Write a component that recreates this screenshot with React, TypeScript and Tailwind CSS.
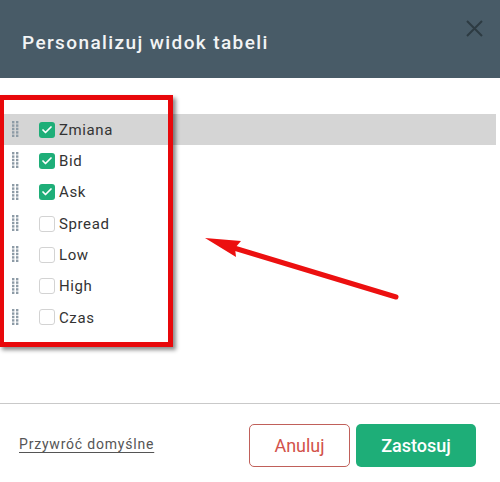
import { Check } from "lucide-react";

const columns = [
  { name: "Zmiana", checked: true, active: true },
  { name: "Bid", checked: true },
  { name: "Ask", checked: true },
  { name: "Spread", checked: false },
  { name: "Low", checked: false },
  { name: "High", checked: false },
  { name: "Czas", checked: false },
];

function DragHandle() {
  const dots = [];
  for (let r = 0; r < 5; r++) {
    for (let c = 0; c < 2; c++) {
      dots.push(<rect key={`${r}-${c}`} x={c * 4} y={r * 3.4} width="2.4" height="2.4" fill="#8d9ba6" />);
    }
  }
  return (
    <svg width="7" height="17" viewBox="0 0 7 17" className="shrink-0">
      {dots}
    </svg>
  );
}

export default function App() {
  return (
    <div className="relative w-[500px] h-[482px] bg-white overflow-hidden" style={{ fontFamily: "Roboto, 'Liberation Sans', sans-serif" }}>
      <header className="h-[78px] bg-[#485b67] flex items-center justify-between pl-[22px] pr-[16px]">
        <h1 className="text-[19px] font-medium tracking-[1.4px] text-[#f2f4f5] pt-[8px]">Personalizuj widok tabeli</h1>
        <button className="self-start mt-[19px] text-[#2d3b42]" aria-label="Zamknij">
          <svg width="19" height="19" viewBox="0 0 19 19">
            <path d="M2 2 L17 17 M17 2 L2 17" stroke="currentColor" strokeWidth="2" />
          </svg>
        </button>
      </header>

      <div className="h-[325px] pt-[36px] pr-[4px]">
        <ul>
          {columns.map((col) => (
            <li
              key={col.name}
              className={`h-[31.3px] flex items-center pl-[12px] ${col.active ? "bg-[#d5d5d5]" : ""}`}
            >
              <DragHandle />
              <span
                className={`ml-[20px] w-[16px] h-[16px] rounded-[3px] flex items-center justify-center ${
                  col.checked ? "bg-[#1eae78]" : "border border-[#d3d3d3] bg-white"
                }`}
              >
                {col.checked && <Check className="w-[12px] h-[12px] text-white" strokeWidth={3.5} />}
              </span>
              <span className="ml-[4px] pt-[1px] text-[15px] tracking-[0.6px] text-[#333]">{col.name}</span>
            </li>
          ))}
        </ul>
      </div>

      <footer className="border-t border-[#c9c9c9] h-[79px] flex items-center justify-between pl-[19px] pr-[24px]">
        <a href="#" className="text-[14px] tracking-[0.8px] text-[#555] underline underline-offset-[3px] pt-[2px]">
          Przywróć domyślne
        </a>
        <div className="flex gap-[6px] pt-[4px]">
          <button className="w-[101px] h-[43px] rounded-[5px] border border-[#c0605a] text-[#d2524a] text-[18px]">
            Anuluj
          </button>
          <button className="w-[120px] h-[43px] rounded-[5px] bg-[#1eae78] text-white text-[18px] font-medium">
            Zastosuj
          </button>
        </div>
      </footer>

      {/* annotation overlay */}
      <div className="absolute left-[-1px] top-[95px] w-[174px] h-[252px] border-[5px] border-[#e8080b] shadow-[3px_3px_4px_rgba(0,0,0,0.45)] pointer-events-none" />
      <svg className="absolute left-0 top-0 pointer-events-none" width="500" height="482" viewBox="0 0 500 482">
        <line x1="396" y1="297" x2="234" y2="248" stroke="#ec1010" strokeWidth="5" strokeLinecap="round" />
        <path d="M205 238 L241 241 L235 248 L236 257 Z" fill="#ec1010" />
      </svg>
    </div>
  );
}
